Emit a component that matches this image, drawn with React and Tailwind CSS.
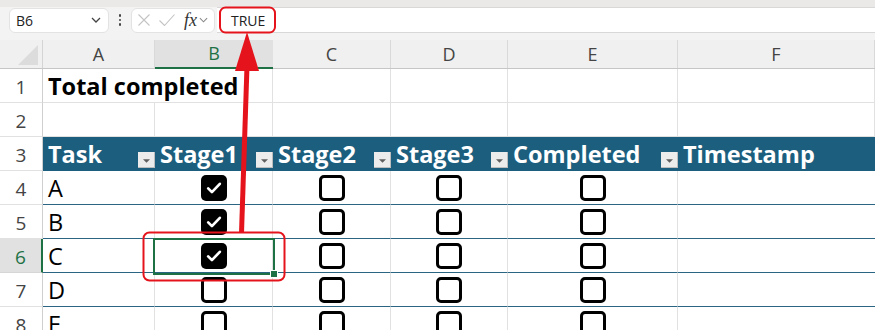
import React from 'react';

const grid = 'grid grid-cols-[43px_112px_118px_118px_117px_170px_1fr]';
const font = { fontFamily: '"Open Sans", "Noto Sans", sans-serif' };

const rows = [
  { n: 4, task: 'A', v: [true, false, false, false] },
  { n: 5, task: 'B', v: [true, false, false, false] },
  { n: 6, task: 'C', v: [true, false, false, false] },
  { n: 7, task: 'D', v: [false, false, false, false] },
  { n: 8, task: 'E', v: [false, false, false, false] },
];

function Check({ on }) {
  if (on) {
    return (
      <span className="w-[26px] h-[26px] rounded-[5px] bg-black flex items-center justify-center">
        <svg viewBox="0 0 24 24" className="w-[20px] h-[20px]" fill="none" stroke="white" strokeWidth="3.2" strokeLinecap="round" strokeLinejoin="round">
          <path d="M5 12.5l4.5 4.5L19 7" />
        </svg>
      </span>
    );
  }
  return <span className="w-[26px] h-[26px] rounded-[5px] border-[3px] border-black bg-white" />;
}

function Dropdown() {
  return (
    <span className="w-[17px] h-[16px] mb-[1px] bg-[#ececec] border-r border-b border-[#bdbdbd] flex items-end justify-center pb-[4px] shrink-0">
      <svg viewBox="0 0 8 4" className="w-[7px] h-[4px]"><path d="M0 0h8L4 4z" fill="#5f5f5f" /></svg>
    </span>
  );
}

function RowHead({ n, sel }) {
  return (
    <div
      className={
        sel
          ? 'flex items-center justify-center pt-[4px] text-[19px] text-[#1e7145] bg-[#e1e1e1] border-b border-[#d6d6d6] border-r-2 border-r-[#1e7145]'
          : 'flex items-center justify-center pt-[4px] text-[19px] text-[#444] bg-white border-b border-[#e1e1e1] border-r border-r-[#cfcfcf]'
      }
    >
      {n}
    </div>
  );
}

export default function App() {
  return (
    <div className="w-[875px] h-[330px] overflow-hidden relative bg-[#f3f3f3] text-black" style={font}>
      {/* ribbon edge */}
      <div className="h-[7px] bg-[#ebe8e8]" />

      {/* formula bar */}
      <div className="h-[26px] flex items-center">
        <div className="ml-[9px] w-[100px] h-[25px] bg-white rounded-[6px] border border-[#e3e3e3] flex items-center justify-between pl-[6px] pr-[7px]">
          <span className="text-[14px] text-[#222]">B6</span>
          <svg viewBox="0 0 10 6" className="w-[10px] h-[6px]" fill="none" stroke="#444" strokeWidth="1.3"><path d="M1 1l4 4 4-4" /></svg>
        </div>
        <div className="w-[22px] flex flex-col items-center gap-[2px]">
          <span className="w-[2.5px] h-[2.5px] rounded-full bg-[#444]" />
          <span className="w-[2.5px] h-[2.5px] rounded-full bg-[#444]" />
          <span className="w-[2.5px] h-[2.5px] rounded-full bg-[#444]" />
        </div>
        <div className="w-[84px] h-[25px] bg-white rounded-[6px] border border-[#e3e3e3] flex items-center pl-[6px]">
          <svg viewBox="0 0 12 12" className="w-[12px] h-[12px]" fill="none" stroke="#c4c4c4" strokeWidth="1.1"><path d="M0.5 0.5l11 11M11.5 0.5l-11 11" /></svg>
          <svg viewBox="0 0 16 12" className="w-[16px] h-[12px] ml-[9px]" fill="none" stroke="#c4c4c4" strokeWidth="1.1"><path d="M0.5 6.5l5 5 10-11" /></svg>
          <span className="ml-[9px] text-[18px] italic text-[#333] leading-none" style={{ fontFamily: '"Liberation Serif", serif' }}>fx</span>
          <svg viewBox="0 0 10 6" className="w-[9px] h-[6px] ml-[2px]" fill="none" stroke="#888" strokeWidth="1.2"><path d="M1 1l4 4 4-4" /></svg>
        </div>
        <div className="ml-[2px] flex-1 h-[26px] bg-white border-y border-[#d8d8d8] flex items-center pl-[14px]">
          <span className="text-[14px] text-[#222]">TRUE</span>
        </div>
      </div>
      <div className="h-[7px]" />

      {/* column headers */}
      <div className={`${grid} h-[29px] bg-[#f0f0f0] border-b border-[#c6c6c6]`}>
        <div className="border-r border-[#d4d4d4] flex items-end justify-end pr-[4px] pb-[3px]">
          <svg viewBox="0 0 20 20" className="w-[20px] h-[20px]"><path d="M20 0v20H0z" fill="#dcdcdc" /></svg>
        </div>
        {['A', 'B', 'C', 'D', 'E', 'F'].map((c) => (
          <div
            key={c}
            className={
              c === 'B'
                ? 'flex items-center justify-center text-[18px] text-[#1e7145] bg-[#e1e1e1] border-b-2 border-[#1e7145] -mb-px'
                : 'flex items-center justify-center text-[18px] text-[#444] border-r border-[#d9d9d9]'
            }
          >
            {c}
          </div>
        ))}
      </div>

      {/* row 1 */}
      <div className={`${grid} h-[34px]`}>
        <RowHead n={1} />
        <div className="relative z-10 bg-white border-b border-[#e1e1e1] flex items-end pl-[5px] pb-[1px]">
          <span className="text-[23.5px] font-bold whitespace-nowrap leading-[30px]">Total completed</span>
        </div>
        {[0, 1, 2, 3, 4].map((i) => (
          <div key={i} className="bg-white border-b border-r border-[#e1e1e1]" />
        ))}
      </div>

      {/* row 2 */}
      <div className={`${grid} h-[34px]`}>
        <RowHead n={2} />
        {[0, 1, 2, 3, 4, 5].map((i) => (
          <div key={i} className="bg-white border-b border-r border-[#e1e1e1]" />
        ))}
      </div>

      {/* row 3: table header */}
      <div className={`${grid} h-[34px]`}>
        <RowHead n={3} />
        {['Task', 'Stage1', 'Stage2', 'Stage3', 'Completed', 'Timestamp'].map((h, i) => (
          <div key={h} className="bg-[#1c5e7e] border-b border-[#1c5e7e] flex items-end justify-between pl-[5px] pb-[1px]">
            <span className="text-[23.5px] font-bold text-white whitespace-nowrap leading-[30px]">{h}</span>
            {i < 5 && <Dropdown />}
          </div>
        ))}
      </div>

      {/* table body */}
      {rows.map((r) => (
        <div key={r.n} className={`${grid} h-[34px]`}>
          <RowHead n={r.n} sel={r.n === 6} />
          <div className="bg-white border-b border-[#2a6683] border-r border-r-[#e1e1e1] flex items-end pl-[5px] pb-[1px]">
            <span className="text-[23.5px] leading-[30px]">{r.task}</span>
          </div>
          {r.v.map((on, i) => (
            <div key={i} className="bg-white border-b border-[#2a6683] border-r border-r-[#e1e1e1] flex items-center justify-center">
              <Check on={on} />
            </div>
          ))}
          <div className="bg-white border-b border-[#2a6683]" />
        </div>
      ))}

      {/* active cell B6 */}
      <div className="absolute left-[153px] top-[238px] w-[122px] h-[37px] border-2 border-[#1e7145] pointer-events-none">
        <span className="absolute -right-[4px] -bottom-[4px] w-[6px] h-[6px] bg-[#1e7145] outline outline-1 outline-white" />
      </div>

      {/* red annotation */}
      <svg className="absolute inset-0 pointer-events-none" width="875" height="330" viewBox="0 0 875 330">
        <rect x="220" y="7.5" width="55" height="25" rx="5.5" fill="none" stroke="#e5141c" strokeWidth="2" />
        <rect x="143.5" y="232.5" width="141" height="48" rx="6" fill="none" stroke="#e5141c" strokeWidth="2" />
        <path d="M247 66L241.5 233" stroke="#e5141c" strokeWidth="5" />
        <path d="M247 32L235 71h24z" fill="#e5141c" />
      </svg>
    </div>
  );
}
